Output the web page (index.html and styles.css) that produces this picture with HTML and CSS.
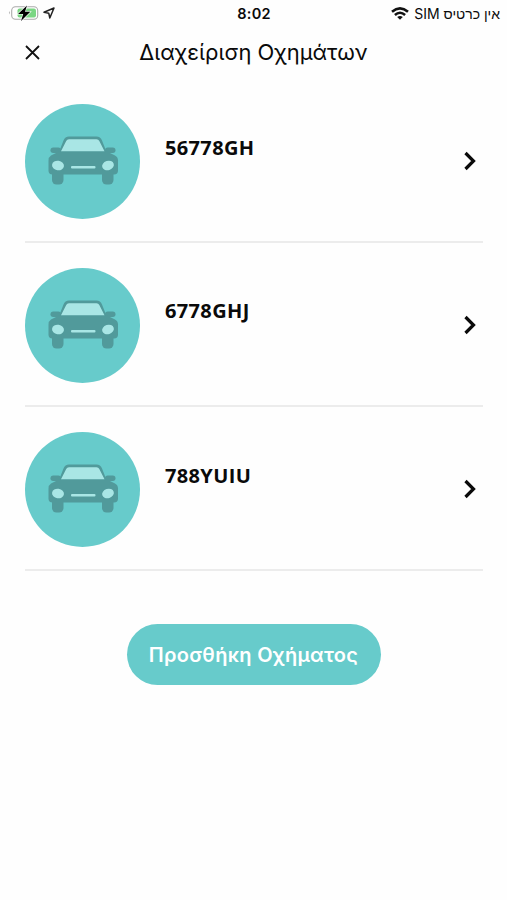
FILE: index.html
```
<!DOCTYPE html>
<html lang="el">
<head>
    <meta charset="UTF-8">
    <meta name="viewport" content="width=device-width, initial-scale=1.0">
    <title>Διαχείριση Οχημάτων</title>
    <link rel="stylesheet" href="styles.css">
</head>
<body>
    <svg width="0" height="0" class="sprite">
        <symbol id="car" viewBox="0 0 115 115">
            <g fill="#519a9b">
                <path d="M32 53 L38.500 36.500 Q40 32.500 44 32.500 H71.500 Q75.500 32.500 77 36.500 L83.500 53 Z"/>
                <rect x="25.500" y="43.500" width="10.500" height="5.500" rx="2.700"/>
                <rect x="80" y="43.500" width="10.500" height="5.500" rx="2.700"/>
                <path d="M34 47.500 H82 L90 51.500 Q93 53 93 56.500 V66.500 Q93 70.500 89 70.500 H27.500 Q23.500 70.500 23.500 66.500 V56.500 Q23.500 53 26 51.500 Z"/>
                <rect x="27" y="62" width="11.500" height="18.500" rx="4.500"/>
                <rect x="77" y="62" width="11.500" height="18.500" rx="4.500"/>
            </g>
            <g fill="#a9e6e5">
                <path d="M41.200 37 Q42 35.300 44 35.300 H71.500 Q73.500 35.300 74.300 37 L79.500 47.300 H36 Z"/>
                <ellipse cx="33" cy="61.500" rx="6" ry="4.700" transform="rotate(8 33 61.500)"/>
                <ellipse cx="83" cy="61.500" rx="6" ry="4.700" transform="rotate(-18 83 61.500)"/>
                <rect x="46" y="62" width="24.500" height="2.600" rx="1"/>
            </g>
        </symbol>
        <symbol id="chevron" viewBox="0 0 14 20">
            <path d="M2.500 2 L10.500 10 L2.500 18" fill="none" stroke="#0a0a0a" stroke-width="3.200"/>
        </symbol>
    </svg>

    <div class="status-bar">
        <div class="status-left">
            <svg width="31" height="18" viewBox="0 0 31 18">
                <path d="M1.800 7 Q0 8.700 1.800 10.500 Z" fill="#aaa"/>
                <rect x="3.700" y="2.700" width="26" height="12.500" rx="3.800" fill="#fff" stroke="#aaa" stroke-width="1.100"/>
                <rect x="9.500" y="4.500" width="18.500" height="9" rx="2" fill="#7bd684"/>
                <path d="M19 1.500 L10 10 H15.200 L13 17 L22.300 7.800 H17 Z" fill="#000" stroke="#fff" stroke-width="1.200" paint-order="stroke"/>
            </svg>
            <svg width="12" height="12" viewBox="0 0 12 12">
                <path d="M1 5.300 L11 1 L6.800 11 L5.800 6.300 Z" fill="none" stroke="#222" stroke-width="1.500" stroke-linejoin="round"/>
            </svg>
        </div>
        <div class="status-time">8:02</div>
        <div class="status-right">
            <svg width="18" height="13" viewBox="0 0 18 13">
                <g fill="none" stroke="#111" stroke-width="2.600">
                    <path d="M1 4.700 Q9 -2 17 4.700"/>
                    <path d="M3.900 7.900 Q9 3.600 14.100 7.900"/>
                </g>
                <path d="M6.200 10 Q9 7.900 11.800 10 L9 12.800 Z" fill="#111"/>
            </svg>
            <span class="carrier" dir="rtl" lang="he">אין כרטיס SIM</span>
        </div>
    </div>

    <div class="header">
        <svg class="close" width="15" height="15" viewBox="0 0 15 15">
            <path d="M1 1 L14 14 M14 1 L1 14" stroke="#111" stroke-width="1.800"/>
        </svg>
        <h1>Διαχείριση Οχημάτων</h1>
    </div>

    <div class="vehicles">
        <div class="vehicle">
            <div class="avatar"><svg><use href="#car"/></svg></div>
            <div class="plate">56778GH</div>
            <svg class="chevron"><use href="#chevron"/></svg>
        </div>
        <div class="vehicle">
            <div class="avatar"><svg><use href="#car"/></svg></div>
            <div class="plate">6778GHJ</div>
            <svg class="chevron"><use href="#chevron"/></svg>
        </div>
        <div class="vehicle">
            <div class="avatar"><svg><use href="#car"/></svg></div>
            <div class="plate">788YUIU</div>
            <svg class="chevron"><use href="#chevron"/></svg>
        </div>
    </div>

    <button class="add-button">Προσθήκη Οχήματος</button>
</body>
</html>
```
FILE: styles.css
```
body {
    margin: 0;
    height: 900px;
    overflow: hidden;
    background-color: #fefefe;
    color: #0a0a0a;
    font-family: Inter, sans-serif;
}
.sprite {
    display: none;
}
.status-bar {
    display: grid;
    grid-template-columns: 1fr auto 1fr;
    align-items: center;
    height: 27px;
    padding: 0 7px 0 8px;
}
.status-left {
    display: flex;
    align-items: center;
    gap: 4px;
    height: 18px;
    margin-bottom: 1px;
}
.status-time {
    font-size: 14.500px;
    font-weight: 600;
    letter-spacing: 0.2px;
}
.status-right {
    display: flex;
    align-items: center;
    justify-content: flex-end;
    gap: 5px;
}
.carrier {
    font-family: Inter, "Liberation Sans", sans-serif;
    font-size: 14px;
    white-space: nowrap;
}
.header {
    display: grid;
    grid-template-columns: 40px 1fr 40px;
    align-items: center;
    height: 50px;
    padding: 0 25px;
}
.header h1 {
    margin: 0;
    font-size: 21.900px;
    font-weight: 400;
    text-align: center;
    white-space: nowrap;
}
.vehicles {
    padding: 3px 24px 0 25px;
}
.vehicle {
    display: flex;
    align-items: center;
    height: 162.300px;
    border-bottom: 2px solid #ececec;
}
.vehicle:first-child {
    height: 160.600px;
}
.avatar {
    width: 115px;
    height: 115px;
    margin-top: 2.800px;
    border-radius: 50%;
    background-color: #67cbcb;
}
.avatar svg {
    display: block;
    width: 115px;
    height: 115px;
}
.plate {
    flex: 1;
    margin-left: 25px;
    padding-bottom: 25.500px;
    font-family: "Open Sans", sans-serif;
    font-size: 20px;
    font-weight: 700;
    letter-spacing: 0.350px;
}
.chevron {
    width: 14px;
    height: 20px;
    margin: 2px 6px 0 0;
}
.add-button {
    display: block;
    width: 254px;
    height: 61px;
    margin: 52.500px auto 0;
    padding: 2px 0 0;
    border: none;
    border-radius: 31px;
    background-color: #67cbcb;
    color: #fff;
    font-family: Inter, sans-serif;
    font-size: 20px;
    font-weight: 600;
    letter-spacing: 0.300px;
    cursor: pointer;
}
```
